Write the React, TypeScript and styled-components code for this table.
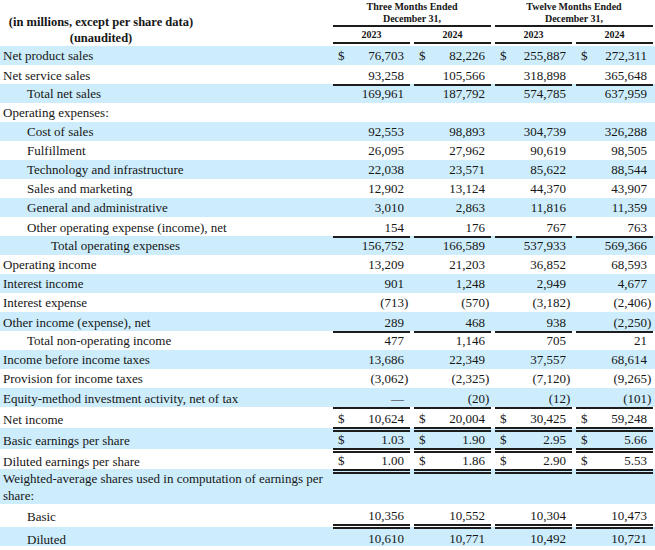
import React from 'react';
import styled, { createGlobalStyle } from 'styled-components';

type Rule = 'none' | 'single' | 'double';

interface Line {
  label: string;
  indent?: number;
  values?: string[];
  dollar?: boolean;
  rule?: Rule;
  height?: number;
}

const GlobalStyle = createGlobalStyle`
  body {
    margin: 0;
    background: #fff;
  }
`;

const COLUMNS = '329px repeat(4, 77px)';

const Sheet = styled.div`
  width: 655px;
  font-family: 'Liberation Serif', 'Times New Roman', serif;
  color: #161616;
`;

const Head = styled.div`
  display: grid;
  grid-template-columns: ${COLUMNS};
  grid-template-rows: 27px 19px;
  column-gap: 4px;
  font-weight: bold;
`;

const Title = styled.div`
  grid-row: 1 / 3;
  align-self: end;
  width: 202px;
  font-size: 12.5px;
  line-height: 16px;
  text-align: center;
`;

const Period = styled.div<{ $col: string }>`
  grid-column: ${(p) => p.$col};
  grid-row: 1;
  box-sizing: border-box;
  padding-top: 1px;
  border-bottom: 2px solid #1c1c1c;
  font-size: 10px;
  line-height: 12px;
  text-align: center;
`;

const Year = styled.div`
  grid-row: 2;
  align-self: start;
  box-sizing: border-box;
  height: 17px;
  border-bottom: 2px solid #1c1c1c;
  font-size: 10px;
  line-height: 15px;
  text-align: center;
`;

const Row = styled.div<{ $shaded: boolean; $h: number }>`
  display: grid;
  grid-template-columns: ${COLUMNS};
  column-gap: 4px;
  height: ${(p) => p.$h}px;
  background: ${(p) => (p.$shaded ? '#cdedfc' : '#fff')};
  font-size: 13px;
  line-height: 17px;
`;

const Label = styled.div<{ $indent: number }>`
  align-self: center;
  padding-left: ${(p) => 3 + p.$indent * 24}px;
  padding-right: 4px;
`;

const Cell = styled.div<{ $rule: Rule }>`
  box-sizing: border-box;
  display: flex;
  align-items: center;
  justify-content: space-between;
  padding: 0 6px 0 5px;
  padding-top: ${(p) => (p.$rule === 'double' ? 3 : p.$rule === 'single' ? 2 : 0)}px;
  border-bottom: ${(p) =>
    p.$rule === 'double' ? '5px double #1c1c1c' : p.$rule === 'single' ? '2px solid #1c1c1c' : 'none'};
`;

const Num = styled.span`
  margin-left: auto;
  white-space: nowrap;
`;

const Close = styled.span`
  margin-right: -0.333em;
`;

const lines: Line[] = [
  { label: 'Net product sales', values: ['76,703', '82,226', '255,887', '272,311'], dollar: true },
  { label: 'Net service sales', values: ['93,258', '105,566', '318,898', '365,648'], rule: 'single' },
  { label: 'Total net sales', indent: 1, values: ['169,961', '187,792', '574,785', '637,959'] },
  { label: 'Operating expenses:' },
  { label: 'Cost of sales', indent: 1, values: ['92,553', '98,893', '304,739', '326,288'] },
  { label: 'Fulfillment', indent: 1, values: ['26,095', '27,962', '90,619', '98,505'] },
  { label: 'Technology and infrastructure', indent: 1, values: ['22,038', '23,571', '85,622', '88,544'] },
  { label: 'Sales and marketing', indent: 1, values: ['12,902', '13,124', '44,370', '43,907'] },
  { label: 'General and administrative', indent: 1, values: ['3,010', '2,863', '11,816', '11,359'] },
  {
    label: 'Other operating expense (income), net',
    indent: 1,
    values: ['154', '176', '767', '763'],
    rule: 'single',
  },
  { label: 'Total operating expenses', indent: 2, values: ['156,752', '166,589', '537,933', '569,366'] },
  { label: 'Operating income', values: ['13,209', '21,203', '36,852', '68,593'] },
  { label: 'Interest income', values: ['901', '1,248', '2,949', '4,677'] },
  { label: 'Interest expense', values: ['(713)', '(570)', '(3,182)', '(2,406)'] },
  { label: 'Other income (expense), net', values: ['289', '468', '938', '(2,250)'], rule: 'single' },
  { label: 'Total non-operating income', indent: 1, values: ['477', '1,146', '705', '21'] },
  { label: 'Income before income taxes', values: ['13,686', '22,349', '37,557', '68,614'] },
  { label: 'Provision for income taxes', values: ['(3,062)', '(2,325)', '(7,120)', '(9,265)'] },
  {
    label: 'Equity-method investment activity, net of tax',
    values: ['\u2014', '(20)', '(12)', '(101)'],
    rule: 'single',
  },
  {
    label: 'Net income',
    values: ['10,624', '20,004', '30,425', '59,248'],
    dollar: true,
    rule: 'double',
    height: 21,
  },
  {
    label: 'Basic earnings per share',
    values: ['1.03', '1.90', '2.95', '5.66'],
    dollar: true,
    rule: 'double',
    height: 21,
  },
  {
    label: 'Diluted earnings per share',
    values: ['1.00', '1.86', '2.90', '5.53'],
    dollar: true,
    rule: 'double',
    height: 20,
  },
  { label: 'Weighted-average shares used in computation of earnings per share:', height: 35 },
  {
    label: 'Basic',
    indent: 1,
    values: ['10,356', '10,552', '10,304', '10,473'],
    rule: 'double',
    height: 23,
  },
  {
    label: 'Diluted',
    indent: 1,
    values: ['10,610', '10,771', '10,492', '10,721'],
    rule: 'double',
    height: 19,
  },
];

function Amount({ value }: { value: string }) {
  if (value.startsWith('(')) {
    return (
      <Num>
        {value.slice(0, -1)}
        <Close>)</Close>
      </Num>
    );
  }
  return <Num>{value}</Num>;
}

function App() {
  return (
    <>
      <GlobalStyle />
      <Sheet>
        <Head>
          <Title>
            (in millions, except per share data)
            <br />
            (unaudited)
          </Title>
          <Period $col="2 / 4">
            Three Months Ended
            <br />
            December 31,
          </Period>
          <Period $col="4 / 6">
            Twelve Months Ended
            <br />
            December 31,
          </Period>
          {['2023', '2024', '2023', '2024'].map((y, i) => (
            <Year key={`year-${i}`}>{y}</Year>
          ))}
        </Head>

        {lines.map((line, i) => (
          <Row key={line.label} $shaded={i % 2 === 0} $h={line.height ?? 19}>
            <Label $indent={line.indent ?? 0}>{line.label}</Label>
            {line.values &&
              line.values.map((v, j) => (
                <Cell key={`${line.label}-${j}`} $rule={line.rule ?? 'none'}>
                  {line.dollar && <span>$</span>}
                  <Amount value={v} />
                </Cell>
              ))}
          </Row>
        ))}
      </Sheet>
    </>
  );
}

export default App;
